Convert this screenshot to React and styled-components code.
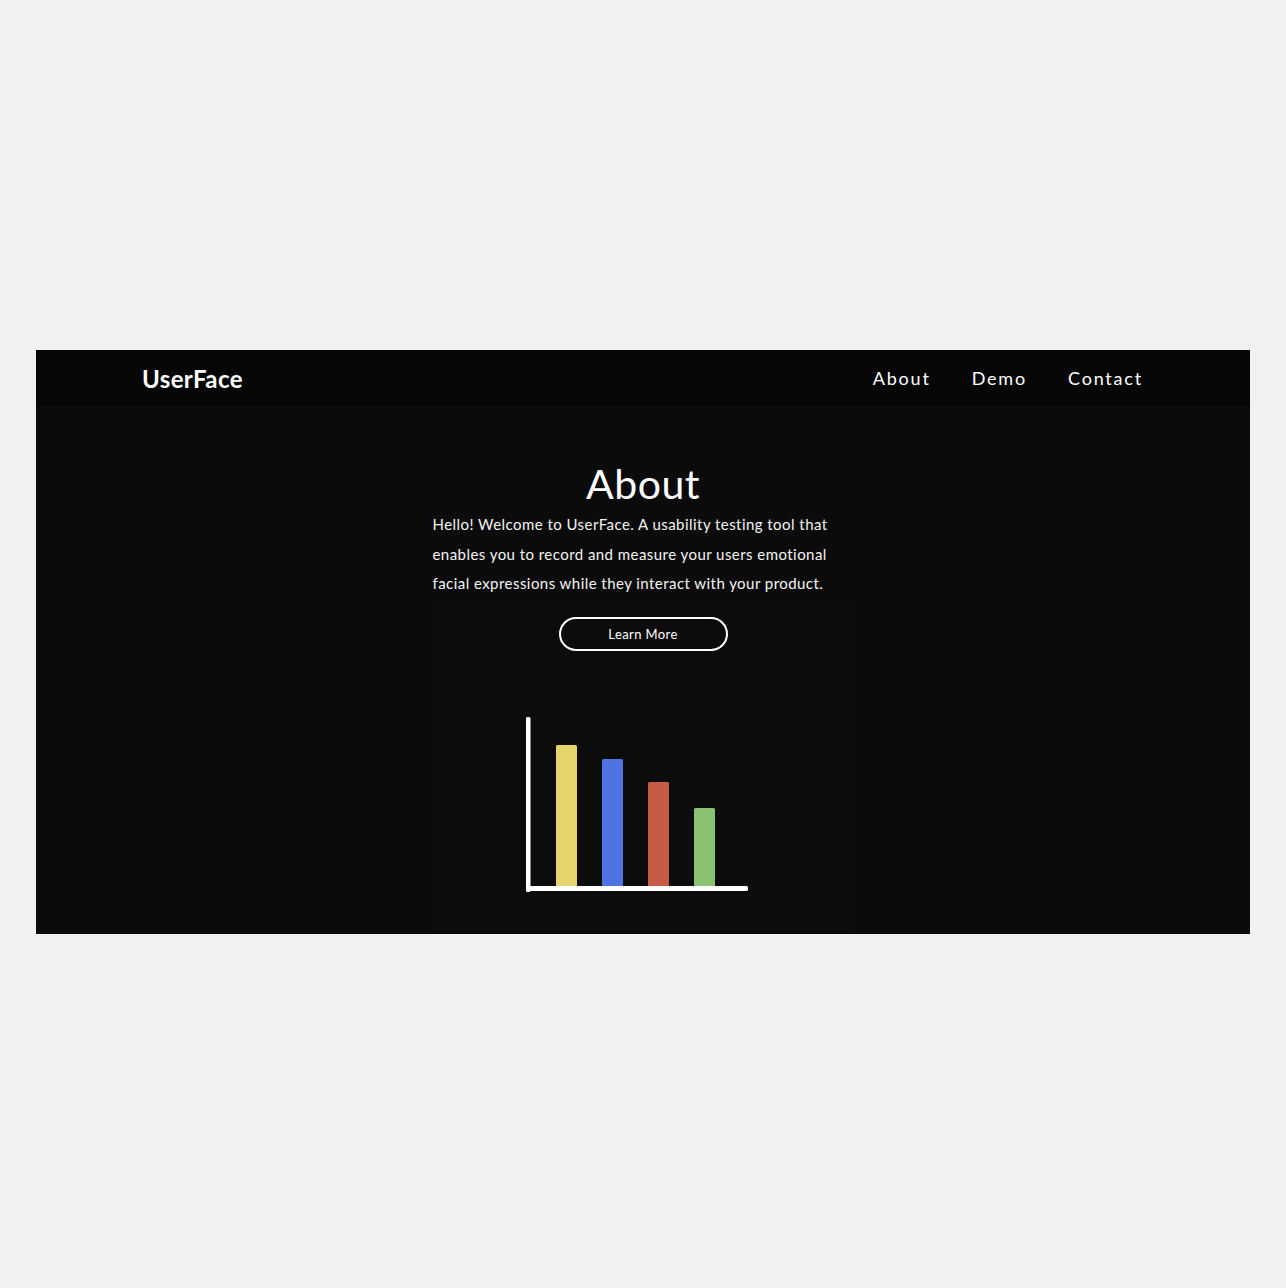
import React from "react";
import styled, { createGlobalStyle } from "styled-components";

const GlobalStyle = createGlobalStyle`
  html, body {
    margin: 0;
    padding: 0;
    background: #f1f1f1;
    font-family: "Lato", "Noto Sans", sans-serif;
  }
`;

const Page = styled.div`
  padding: 350px 36px 0 36px;
`;

const Panel = styled.div`
  background: #0b0b0b;
  color: #fff;
`;

const Nav = styled.nav`
  display: flex;
  align-items: center;
  justify-content: space-between;
  height: 56px;
  padding: 0 107px 0 106px;
  background: #060606;
`;

const Brand = styled.div`
  font-size: 24px;
  font-weight: 700;
  letter-spacing: 0.4px;
`;

const Links = styled.div`
  display: flex;
  gap: 41px;
`;

const NavLink = styled.a`
  color: #fff;
  font-size: 18px;
  letter-spacing: 1.8px;
  text-decoration: none;
`;

const Main = styled.main`
  display: flex;
  justify-content: center;
  padding-top: 52px;
`;

const Column = styled.section`
  width: 421px;
  display: flex;
  flex-direction: column;
`;

const Title = styled.h1`
  margin: 0;
  text-align: center;
  font-size: 41px;
  font-weight: 400;
  line-height: 52px;
  letter-spacing: 0.5px;
`;

const Text = styled.p`
  margin: 0;
  max-width: 404px;
  font-size: 15px;
  line-height: 29.5px;
  letter-spacing: 0.45px;
  color: #f4f4f4;
`;

const ButtonRow = styled.div`
  display: flex;
  justify-content: center;
  padding: 18px 0 0;
  background: #0c0c0c;
`;

const Button = styled.button`
  width: 169px;
  height: 34px;
  border: 2px solid #fff;
  border-radius: 17px;
  background: transparent;
  color: #fff;
  font-family: inherit;
  font-size: 13px;
  letter-spacing: 0.4px;
`;

const ChartBox = styled.div`
  background: #0c0c0c;
  padding: 66px 0 36px 93px;
`;

const bars = [
  { x: 30, top: 28, color: "#e8d46c" },
  { x: 76, top: 42, color: "#4e74e4" },
  { x: 122, top: 65, color: "#c65c48" },
  { x: 168, top: 91, color: "#8bc270" },
];

function BarChart() {
  return (
    <svg width="224" height="178" viewBox="0 0 224 178">
      {bars.map((b) => (
        <rect key={b.color} x={b.x} y={b.top} width="21" height={172 - b.top} rx="1.5" fill={b.color} />
      ))}
      <rect x="0" y="0" width="4.5" height="175" rx="1.5" fill="#fff" />
      <rect x="0" y="169" width="222" height="5" rx="1.5" fill="#fff" />
    </svg>
  );
}

export default function App() {
  return (
    <Page>
      <GlobalStyle />
      <Panel>
        <Nav>
          <Brand>UserFace</Brand>
          <Links>
            <NavLink href="#about">About</NavLink>
            <NavLink href="#demo">Demo</NavLink>
            <NavLink href="#contact">Contact</NavLink>
          </Links>
        </Nav>
        <Main>
          <Column>
            <Title>About</Title>
            <Text>
              Hello! Welcome to UserFace. A usability testing tool that enables you to record
              and measure your users emotional facial expressions while they interact with your
              product.
            </Text>
            <ButtonRow>
              <Button>Learn More</Button>
            </ButtonRow>
            <ChartBox>
              <BarChart />
            </ChartBox>
          </Column>
        </Main>
      </Panel>
    </Page>
  );
}
